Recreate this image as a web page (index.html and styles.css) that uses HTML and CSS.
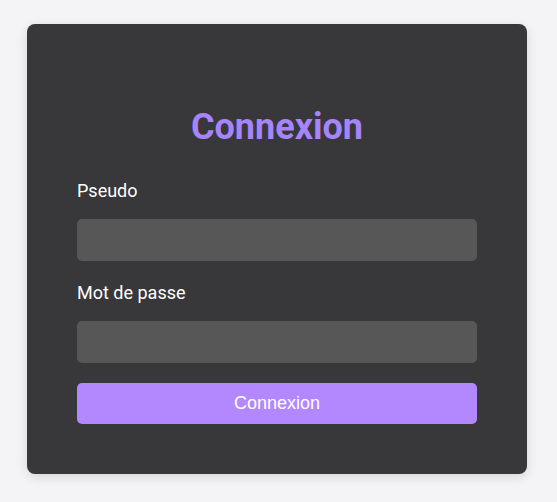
FILE: index.html
```html
<!DOCTYPE html>
<html lang="fr">
<head>
<meta charset="utf-8">
<title>Connexion</title>
<link rel="stylesheet" href="styles.css">
</head>
<body>
<main class="card">
  <h1 class="title">Connexion</h1>
  <form class="form">
    <div class="field field-first">
      <label class="label" for="pseudo">Pseudo</label>
      <input class="input" id="pseudo" type="text">
    </div>
    <div class="field">
      <label class="label" for="mdp">Mot de passe</label>
      <input class="input" id="mdp" type="password">
    </div>
    <button class="btn" type="button">Connexion</button>
  </form>
</main>
</body>
</html>
```
FILE: styles.css
```css
html, body {
  margin: 0;
  padding: 0;
}
body {
  background: #f4f4f6;
  padding: 24px 30px 28px 27px;
  font-family: Roboto, "Liberation Sans", sans-serif;
}
.card {
  box-sizing: border-box;
  width: 500px;
  height: 450px;
  background: #383739;
  border-radius: 8px;
  box-shadow: 0 3px 12px rgba(0, 0, 0, 0.12);
  padding: 50px;
}
.title {
  margin: 32px 0 32px;
  font-size: 36px;
  font-weight: 700;
  line-height: 42px;
  color: #a684fa;
  text-align: center;
}
.form {
  display: flex;
  flex-direction: column;
}
.field {
  display: flex;
  flex-direction: column;
}
.field-first {
  margin-bottom: 21px;
}
.label {
  display: block;
  font-size: 18px;
  line-height: 21px;
  color: #ffffff;
  margin-bottom: 18px;
}
.input {
  box-sizing: border-box;
  width: 400px;
  height: 42px;
  border: none;
  border-radius: 5px;
  background: #575757;
  margin: 0;
  padding: 0 10px;
  outline: none;
}
.btn {
  margin-top: 20px;
  width: 400px;
  height: 41px;
  border: none;
  border-radius: 5px;
  background: #b388ff;
  color: #ffffff;
  font-family: "Liberation Sans", Arial, sans-serif;
  font-size: 18px;
  padding: 0;
}
```
